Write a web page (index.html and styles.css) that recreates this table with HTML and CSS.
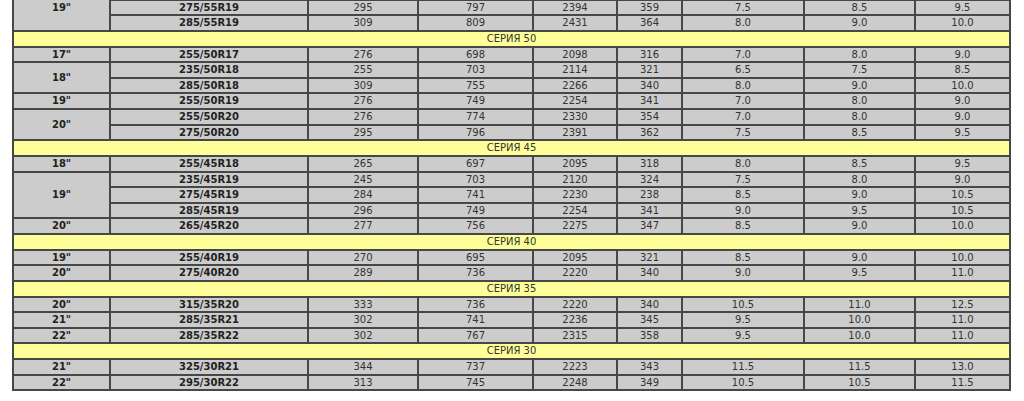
FILE: index.html
```html
<!DOCTYPE html>
<html lang="ru">
<head>
<meta charset="utf-8">
<title>Таблица размеров шин</title>
<link rel="stylesheet" href="styles.css">
</head>
<body>
<table class="tires">
  <colgroup>
    <col class="c1"><col class="c2"><col class="c3"><col class="c4"><col class="c5"><col class="c6"><col class="c7"><col class="c8"><col class="c9">
  </colgroup>
  <tbody>
    <tr><td class="rim" rowspan="3">19"</td><td class="size">&nbsp;</td><td>&nbsp;</td><td>&nbsp;</td><td>&nbsp;</td><td>&nbsp;</td><td>&nbsp;</td><td>&nbsp;</td><td>&nbsp;</td></tr>
    <tr><td class="size">275/55R19</td><td>295</td><td>797</td><td>2394</td><td>359</td><td>7.5</td><td>8.5</td><td>9.5</td></tr>
    <tr><td class="size">285/55R19</td><td>309</td><td>809</td><td>2431</td><td>364</td><td>8.0</td><td>9.0</td><td>10.0</td></tr>
    <tr><td class="series" colspan="9">СЕРИЯ 50</td></tr>
    <tr><td class="rim">17"</td><td class="size">255/50R17</td><td>276</td><td>698</td><td>2098</td><td>316</td><td>7.0</td><td>8.0</td><td>9.0</td></tr>
    <tr><td class="rim" rowspan="2">18"</td><td class="size">235/50R18</td><td>255</td><td>703</td><td>2114</td><td>321</td><td>6.5</td><td>7.5</td><td>8.5</td></tr>
    <tr><td class="size">285/50R18</td><td>309</td><td>755</td><td>2266</td><td>340</td><td>8.0</td><td>9.0</td><td>10.0</td></tr>
    <tr><td class="rim">19"</td><td class="size">255/50R19</td><td>276</td><td>749</td><td>2254</td><td>341</td><td>7.0</td><td>8.0</td><td>9.0</td></tr>
    <tr><td class="rim" rowspan="2">20"</td><td class="size">255/50R20</td><td>276</td><td>774</td><td>2330</td><td>354</td><td>7.0</td><td>8.0</td><td>9.0</td></tr>
    <tr><td class="size">275/50R20</td><td>295</td><td>796</td><td>2391</td><td>362</td><td>7.5</td><td>8.5</td><td>9.5</td></tr>
    <tr><td class="series" colspan="9">СЕРИЯ 45</td></tr>
    <tr><td class="rim">18"</td><td class="size">255/45R18</td><td>265</td><td>697</td><td>2095</td><td>318</td><td>8.0</td><td>8.5</td><td>9.5</td></tr>
    <tr><td class="rim" rowspan="3">19"</td><td class="size">235/45R19</td><td>245</td><td>703</td><td>2120</td><td>324</td><td>7.5</td><td>8.0</td><td>9.0</td></tr>
    <tr><td class="size">275/45R19</td><td>284</td><td>741</td><td>2230</td><td>238</td><td>8.5</td><td>9.0</td><td>10.5</td></tr>
    <tr><td class="size">285/45R19</td><td>296</td><td>749</td><td>2254</td><td>341</td><td>9.0</td><td>9.5</td><td>10.5</td></tr>
    <tr><td class="rim">20"</td><td class="size">265/45R20</td><td>277</td><td>756</td><td>2275</td><td>347</td><td>8.5</td><td>9.0</td><td>10.0</td></tr>
    <tr><td class="series" colspan="9">СЕРИЯ 40</td></tr>
    <tr><td class="rim">19"</td><td class="size">255/40R19</td><td>270</td><td>695</td><td>2095</td><td>321</td><td>8.5</td><td>9.0</td><td>10.0</td></tr>
    <tr><td class="rim">20"</td><td class="size">275/40R20</td><td>289</td><td>736</td><td>2220</td><td>340</td><td>9.0</td><td>9.5</td><td>11.0</td></tr>
    <tr><td class="series" colspan="9">СЕРИЯ 35</td></tr>
    <tr><td class="rim">20"</td><td class="size">315/35R20</td><td>333</td><td>736</td><td>2220</td><td>340</td><td>10.5</td><td>11.0</td><td>12.5</td></tr>
    <tr><td class="rim">21"</td><td class="size">285/35R21</td><td>302</td><td>741</td><td>2236</td><td>345</td><td>9.5</td><td>10.0</td><td>11.0</td></tr>
    <tr><td class="rim">22"</td><td class="size">285/35R22</td><td>302</td><td>767</td><td>2315</td><td>358</td><td>9.5</td><td>10.0</td><td>11.0</td></tr>
    <tr><td class="series" colspan="9">СЕРИЯ 30</td></tr>
    <tr><td class="rim">21"</td><td class="size">325/30R21</td><td>344</td><td>737</td><td>2223</td><td>343</td><td>11.5</td><td>11.5</td><td>13.0</td></tr>
    <tr><td class="rim">22"</td><td class="size">295/30R22</td><td>313</td><td>745</td><td>2248</td><td>349</td><td>10.5</td><td>10.5</td><td>11.5</td></tr>
  </tbody>
</table>
</body>
</html>
```

FILE: styles.css
```css
html, body {
  margin: 0;
  padding: 0;
  background: #ffffff;
}

body {
  font-family: "DejaVu Sans", Verdana, sans-serif;
  font-size: 10px;
  color: #333333;
}

.tires {
  margin: -17px 0 0 12px;
  width: 999px;
  table-layout: fixed;
  border-collapse: separate;
  border-spacing: 0;
  border: 1px solid #474747;
}

.c1 { width: 97px; }
.c2 { width: 198px; }
.c3 { width: 110px; }
.c4 { width: 115px; }
.c5 { width: 84px; }
.c6 { width: 65px; }
.c7 { width: 122px; }
.c8 { width: 111px; }
.c9 { width: 95px; }

.tires td {
  background: #cccccc;
  border: 1px solid #474747;
  padding: 1px 0 0;
  line-height: 12.62px;
  text-align: center;
  vertical-align: middle;
  white-space: nowrap;
}

.tires td.rim,
.tires td.size {
  font-weight: bold;
  color: #222222;
}

.tires td.series {
  background: #ffff99;
  color: #333333;
}
```
